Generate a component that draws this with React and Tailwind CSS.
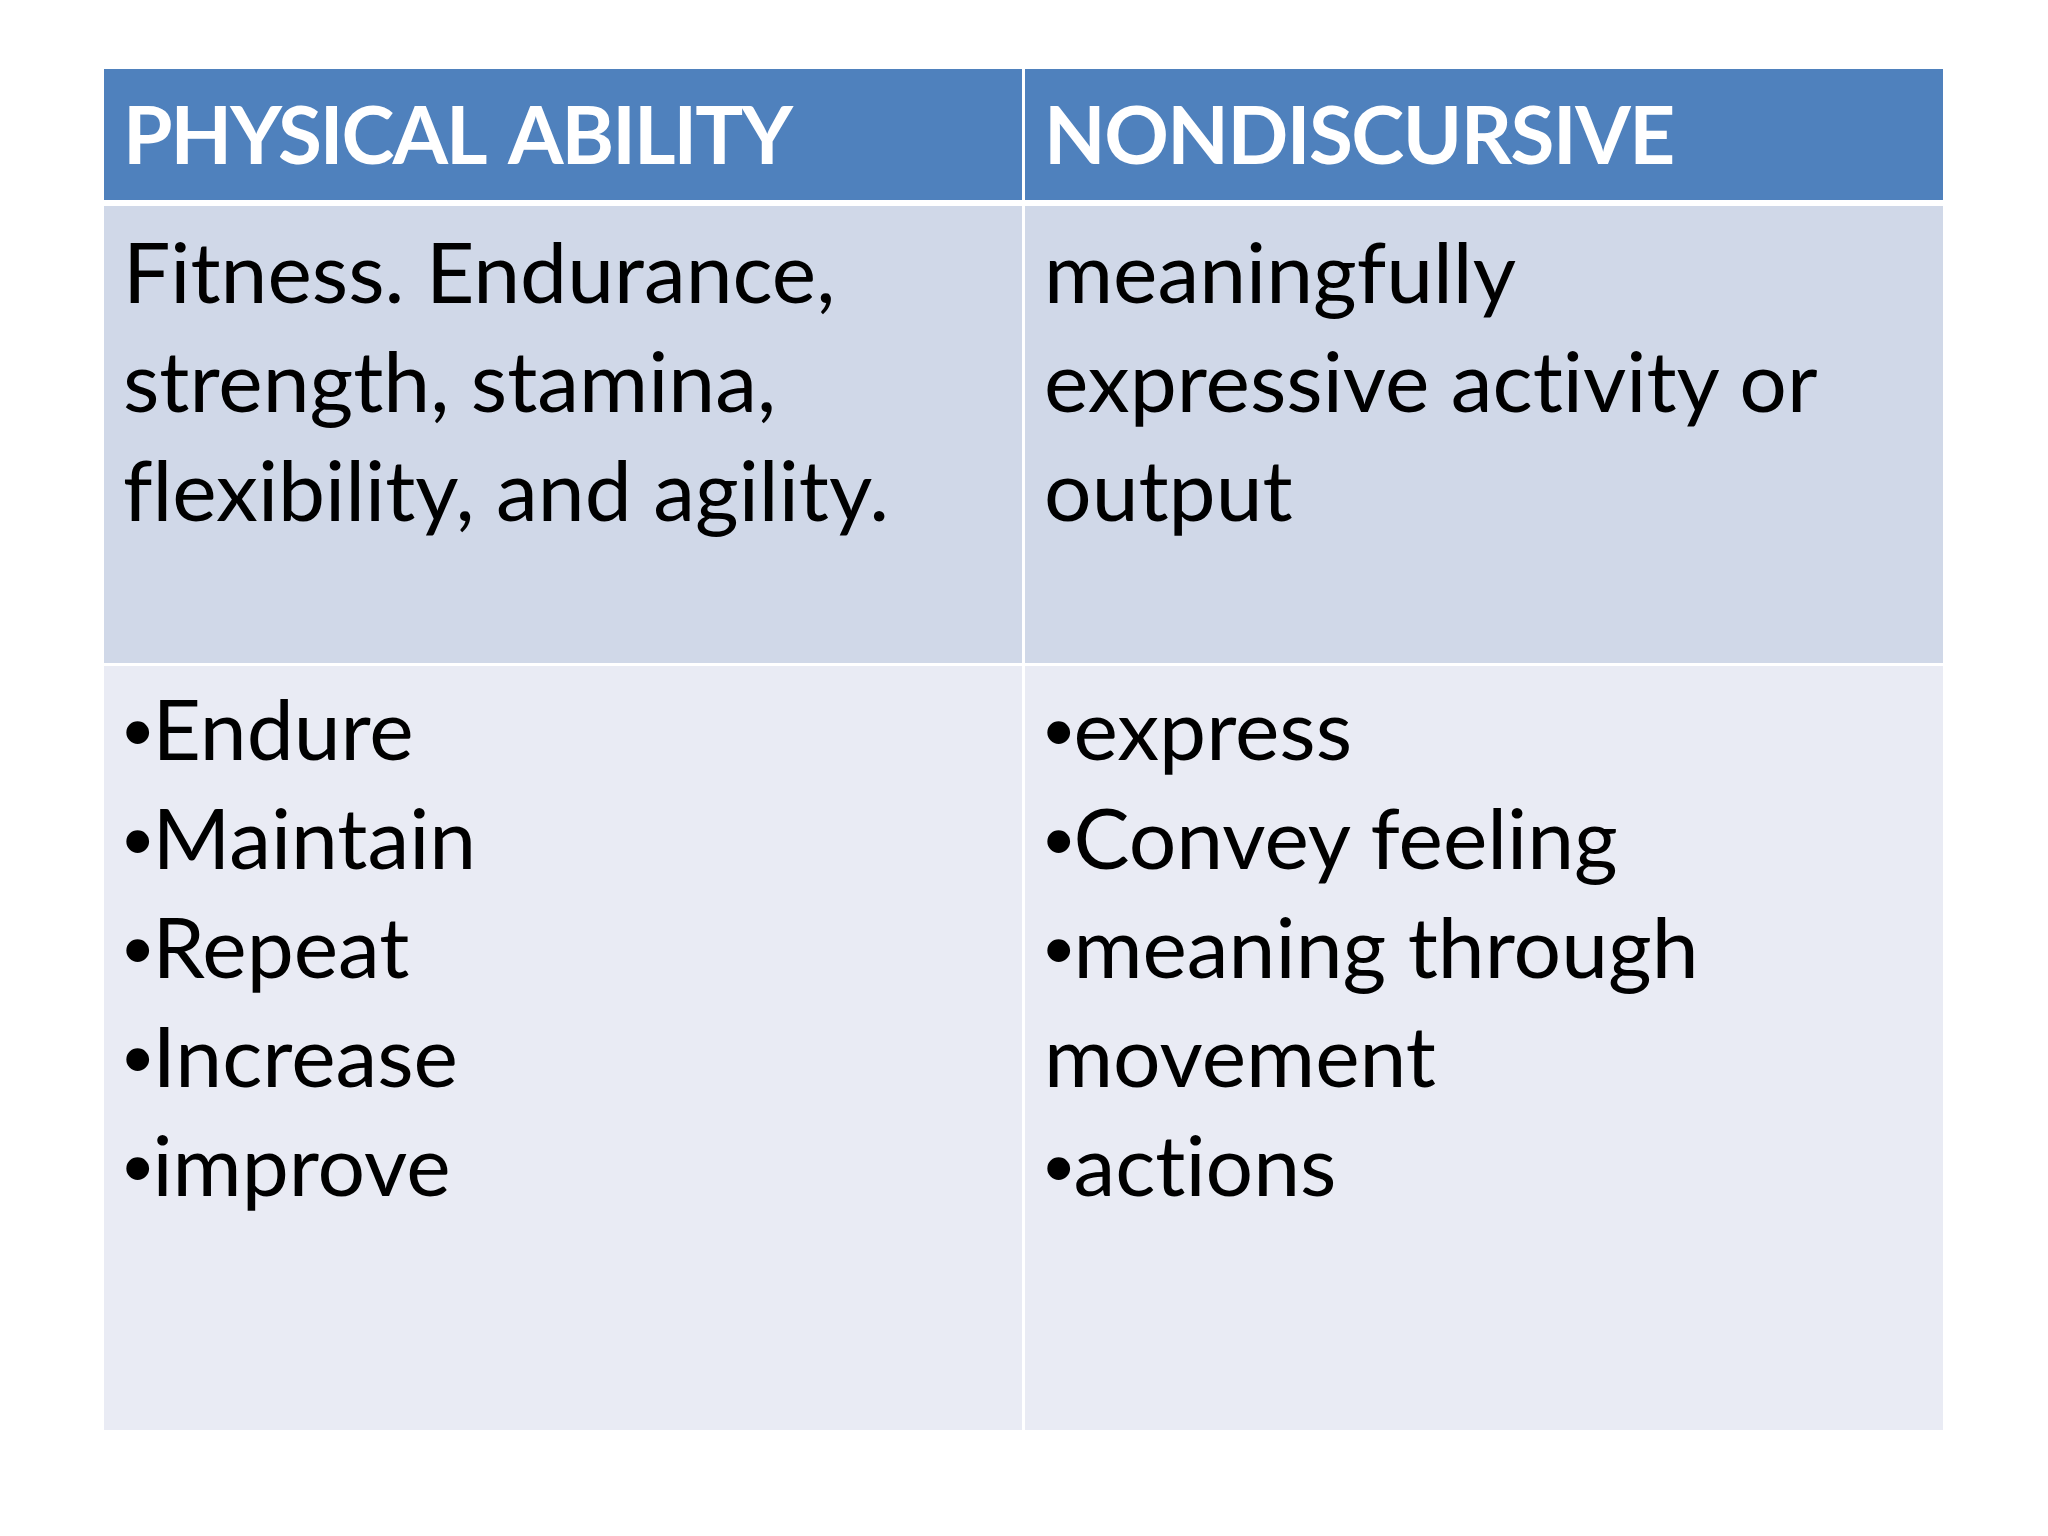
const Bullet = () => (
  <span className="leading-[0]" style={{ fontFamily: '"Liberation Sans", Arial, sans-serif' }}>•</span>
);

export default function App() {
  const font = { fontFamily: 'Lato, "Open Sans", sans-serif' };
  return (
    <div className="w-[2048px] h-[1536px] bg-white pl-[104px] pt-[69px] [font-variant-ligatures:none]" style={font}>
      <div className="w-[1839px] flex flex-col">
        <div className="grid grid-cols-2 gap-x-[3px] h-[131px]">
          <div className="bg-[#4f81bd] pl-[19px] pt-[10px] text-white font-bold text-[80px] tracking-[-2px] [word-spacing:10px] leading-[109px] whitespace-nowrap">
            PHYSICAL ABILITY
          </div>
          <div className="bg-[#4f81bd] pl-[19px] pt-[10px] text-white font-bold text-[80px] tracking-[-1.5px] leading-[109px] whitespace-nowrap">
            NONDISCURSIVE
          </div>
        </div>
        <div className="grid grid-cols-2 gap-x-[3px] h-[457px] mt-[6px]">
          <div className="bg-[#d0d8e8] pl-[19px] pt-[10px] text-black text-[84px] leading-[109px] whitespace-nowrap">
            Fitness. Endurance,<br />strength, stamina,<br />flexibility, and agility.
          </div>
          <div className="bg-[#d0d8e8] pl-[19px] pt-[10px] text-black text-[84px] leading-[109px] whitespace-nowrap">
            meaningfully<br />expressive activity or<br />output
          </div>
        </div>
        <div className="grid grid-cols-2 gap-x-[3px] h-[764px] mt-[3px]">
          <div className="bg-[#e9ebf4] pl-[19px] pt-[7px] text-black text-[84px] leading-[109px] whitespace-nowrap">
            <Bullet />Endure<br />
            <Bullet />Maintain<br />
            <Bullet />Repeat<br />
            <Bullet />Increase<br />
            <Bullet />improve
          </div>
          <div className="bg-[#e9ebf4] pl-[19px] pt-[7px] text-black text-[84px] leading-[109px] whitespace-nowrap">
            <Bullet />express<br />
            <Bullet />Convey feeling<br />
            <Bullet />meaning through<br />
            movement<br />
            <Bullet />actions
          </div>
        </div>
      </div>
    </div>
  );
}
